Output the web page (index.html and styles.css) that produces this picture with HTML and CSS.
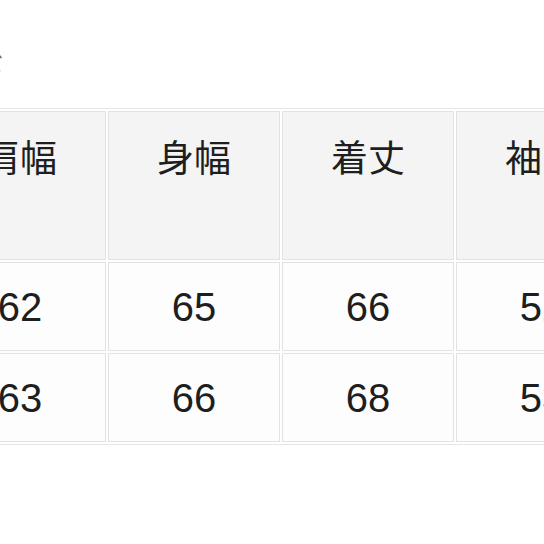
FILE: index.html
```html
<!DOCTYPE html>
<html lang="ja">
<head>
<meta charset="utf-8">
<title>サイズ表</title>
<link rel="stylesheet" href="styles.css">
</head>
<body>
<div class="page">
  <p class="title">サイズ</p>
  <table class="size-table">
    <thead>
      <tr>
        <th>肩幅</th>
        <th>身幅</th>
        <th>着丈</th>
        <th>袖丈</th>
      </tr>
    </thead>
    <tbody>
      <tr>
        <td>62</td>
        <td>65</td>
        <td>66</td>
        <td>52</td>
      </tr>
      <tr>
        <td>63</td>
        <td>66</td>
        <td>68</td>
        <td>53</td>
      </tr>
    </tbody>
  </table>
</div>
</body>
</html>
```

FILE: styles.css
```css
html, body {
  margin: 0;
  padding: 0;
  background: #ffffff;
}

.page {
  width: 544px;
  height: 544px;
  overflow: hidden;
  font-family: "Liberation Sans", "Noto Sans CJK JP", sans-serif;
  color: #1e1e1e;
}

.title {
  margin: 0;
  margin-left: -51px;
  padding-top: 54px;
  height: 108px;
  box-sizing: border-box;
  font-family: "Noto Sans CJK JP", sans-serif;
  font-size: 18px;
  line-height: 1;
  color: #333;
  white-space: nowrap;
}

.size-table {
  width: 700px;
  min-width: 700px;
  margin-left: -69px;
  border-collapse: separate;
  border-spacing: 2px;
  border: 1px solid #e6e6e6;
  table-layout: fixed;
}

.size-table th,
.size-table td {
  width: 172px;
  box-sizing: border-box;
  border: 1px solid #e2e2e2;
  text-align: center;
  padding: 0;
}

.size-table th {
  height: 149px;
  background: #f4f4f4;
  vertical-align: top;
  padding-top: 22px;
  font-family: "Noto Sans CJK JP", sans-serif;
  font-weight: 400;
  font-size: 37px;
  line-height: 1.2;
  color: #1e1e1e;
}

.size-table td {
  height: 89px;
  background: #fdfdfd;
  vertical-align: middle;
  font-size: 40px;
  line-height: 1;
}
```
